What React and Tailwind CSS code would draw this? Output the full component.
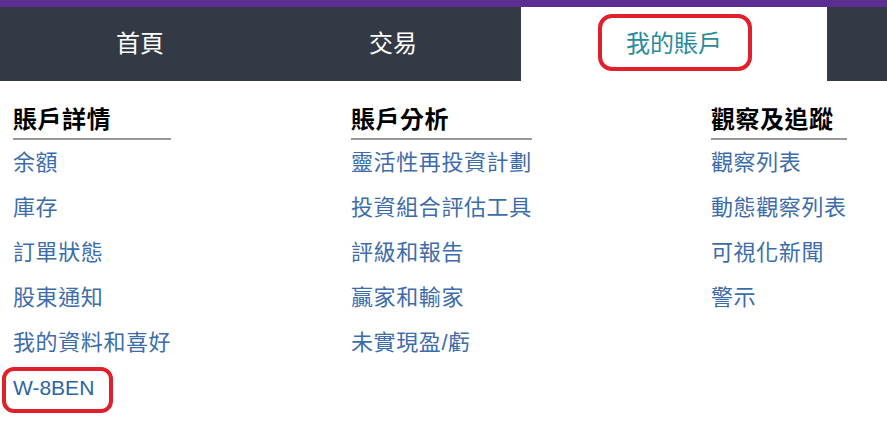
import React from "react";

const columns = [
  {
    title: "賬戶詳情",
    items: ["余額", "庫存", "訂單狀態", "股東通知", "我的資料和喜好", "W-8BEN"],
    width: "w-[338px]",
  },
  {
    title: "賬戶分析",
    items: ["靈活性再投資計劃", "投資組合評估工具", "評級和報告", "贏家和輸家", "未實現盈/虧"],
    width: "w-[360px]",
  },
  {
    title: "觀察及追蹤",
    items: ["觀察列表", "動態觀察列表", "可視化新聞", "警示"],
    width: "flex-1",
  },
];

const App = () => {
  return (
    <div className="relative w-[887px] h-[441px] bg-white overflow-hidden font-['Liberation_Sans','Noto_Sans_CJK_TC',sans-serif]">
      <div className="h-[7px] bg-[#5c2e91]" />

      <nav className="flex h-[74px] bg-[#343a45] text-[24px]">
        <div className="w-[280px] flex items-center justify-center text-white">首頁</div>
        <div className="w-[226px] flex items-center justify-center text-white">交易</div>
        <div className="w-[15px]" />
        <div className="w-[306px] flex items-center justify-center bg-white text-[#2a8a9b]">
          我的賬戶
        </div>
      </nav>

      <div className="flex pl-[13px] pt-[19px]">
        {columns.map((col) => (
          <div key={col.title} className={col.width}>
            <div className="inline-flex flex-col">
              <h3 className="h-[40px] leading-[40px] text-[24px] font-bold text-black border-b-2 border-[#999999] tracking-[0.5px]">
                {col.title}
              </h3>
              {col.items.map((item) => (
                <a
                  key={item}
                  className={
                    item === "W-8BEN"
                      ? "h-[45px] leading-[45px] text-[21px] text-[#2f63a8]"
                      : "h-[45px] leading-[45px] text-[22px] text-[#3d6cab] whitespace-nowrap tracking-[0.6px]"
                  }
                >
                  {item}
                </a>
              ))}
            </div>
          </div>
        ))}
      </div>

      {/* red annotation boxes */}
      <div className="absolute left-[598px] top-[14px] w-[154px] h-[57px] border-4 border-[#e0202a] rounded-[14px]" />
      <div className="absolute left-[2px] top-[367px] w-[111px] h-[46px] border-4 border-[#e0202a] rounded-[12px]" />
    </div>
  );
};

export default App;
